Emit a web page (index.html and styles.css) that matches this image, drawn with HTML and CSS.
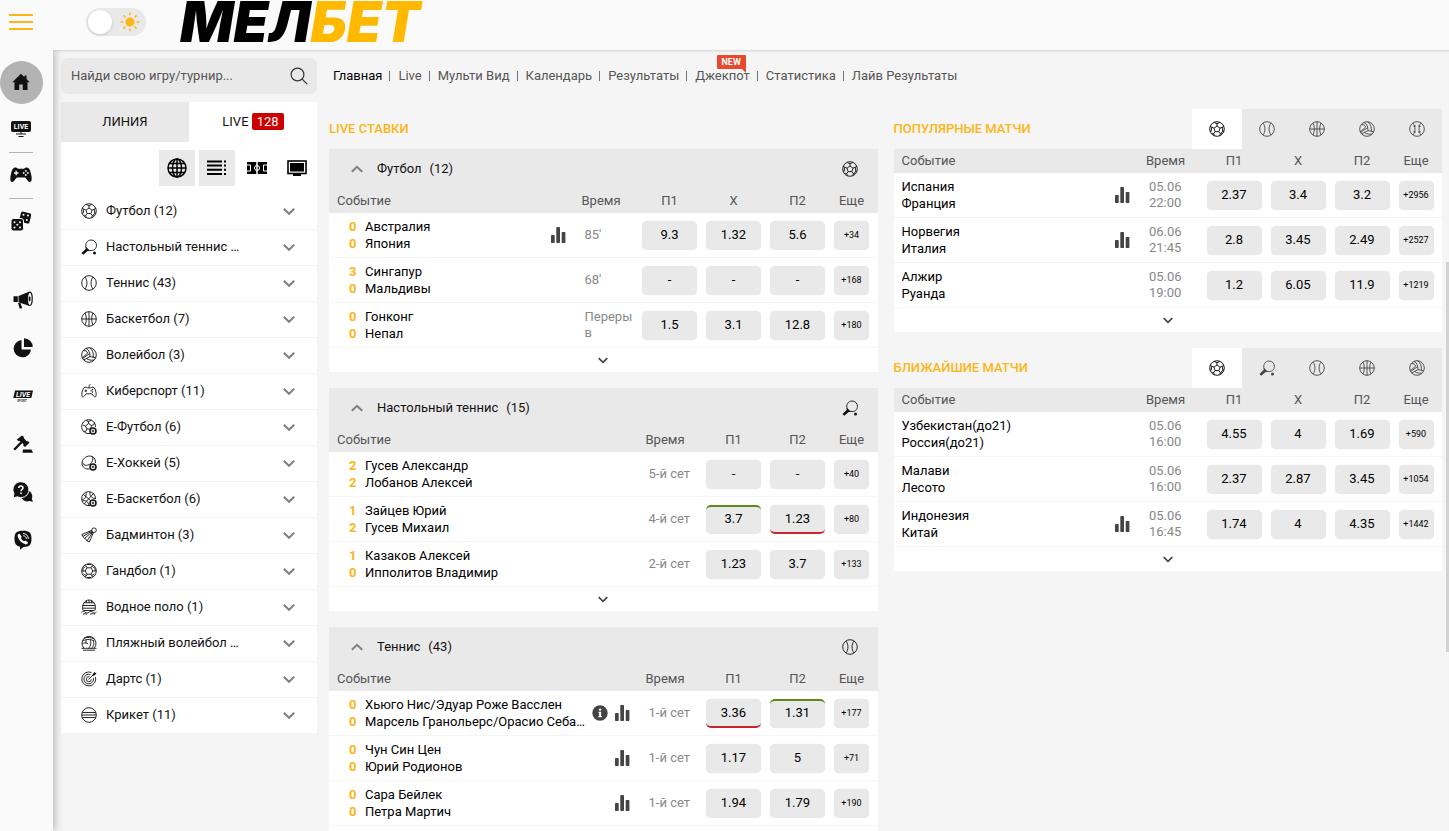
FILE: index.html
```html
<!DOCTYPE html>
<html lang="ru">
<head>
<meta charset="utf-8">
<title>Мелбет</title>
<meta name="viewport" content="width=device-width, initial-scale=1">
<link rel="stylesheet" href="styles.css">
</head>
<body>
<svg class="sprite" aria-hidden="true">
  <symbol id="i-football" viewBox="0 0 16 16"><g fill="none" stroke="currentColor"><circle cx="8" cy="8" r="7.300"/><path d="M8 5l3 2.200-1.100 3.400H6.100L5 7.200zM8 5V2.800M11 7.200l2.200-1M9.900 10.600l1.400 2M6.100 10.600l-1.400 2M5 7.200l-2.200-1M5.200 1.400L8 2.800l2.800-1.400M14.900 5.200l-1.700 1 .6 4-1.700 1.900M13.800 10.200l1 .2M11.300 12.600l-.6 2.200M11.300 12.600l1.500-.4M4.700 12.600l.6 2.200M4.700 12.600l-1.500-.4M1.100 5.200l1.700 1-.6 4-1 .2"/></g></symbol>
  <symbol id="i-pingpong" viewBox="0 0 16 16"><g fill="none" stroke="currentColor"><path d="M5.200 9C3.600 4.500 6.500 1 10 1c3.300 0 5.500 2.600 5.500 5.300 0 3.500-3 5.800-6.800 5.100"/></g><path fill="currentColor" d="M4.800 7.800l4.500 4.100-2.600.2-4.500 3.600L.5 14l4.100-4z"/><circle cx="13.500" cy="14" r="1.500" fill="currentColor"/></symbol>
  <symbol id="i-tennis" viewBox="0 0 16 16"><g fill="none" stroke="currentColor"><circle cx="8" cy="8" r="7.300"/><path d="M4 2c2.600 3.500 2.600 8.500 0 12M12 2c-2.600 3.500-2.600 8.500 0 12"/></g></symbol>
  <symbol id="i-basket" viewBox="0 0 16 16"><g fill="none" stroke="currentColor"><circle cx="8" cy="8" r="7.300"/><path d="M8 .7v14.600M.7 8h14.600M4 2c1.800 3.500 1.800 8.500 0 12M12 2c-1.800 3.500-1.800 8.500 0 12"/></g></symbol>
  <symbol id="i-volley" viewBox="0 0 16 16"><g fill="none" stroke="currentColor"><circle cx="8" cy="8" r="7.300"/><path d="M5 1.500c2.600.8 3.900 3.500 4 8.100l-6.300 3.300M9 9.600l5.700 1.200M8.700 1c2.600 1.300 3.900 4.500 3.600 9.300M2.500 3.500c2.200 0 3.700 1 4.200 2.500L1.200 11M8.700 6.500L1.500 11.500M5.500 11.500c2.300 1.600 4.800 2 7.500 1.500"/></g></symbol>
  <symbol id="i-baseball" viewBox="0 0 16 16"><g fill="none" stroke="currentColor"><circle cx="8" cy="8" r="7.300"/><path d="M4 2c2.600 3.500 2.600 8.500 0 12M12 2c-2.600 3.500-2.600 8.500 0 12M4.500 5.500l2.500-.7M4.500 10.500l2.500.7M11.500 5.500L9 4.800M11.500 10.500l-2.500.7"/></g></symbol>
  <symbol id="i-cyber" viewBox="0 0 16 16"><g fill="none" stroke="currentColor"><path d="M1.200 13.500C.2 11 1.200 7 3 4.700c1.500-1 3-.2 3.500.2h3c.5-.4 2-1.200 3.500-.2 1.800 2.300 2.800 6.300 1.800 8.800-.8 1.500-2.300-.5-4-2.700H5.200c-1.700 2.200-3.200 4.200-4 2.700zM8 4.800V3.200c0-1 1-.6 1-2M3.500 7.800h2.600M4.800 6.500v2.600"/></g><circle cx="11.500" cy="6.500" r=".7" fill="currentColor"/><circle cx="11.500" cy="9" r=".7" fill="currentColor"/><circle cx="10.200" cy="7.800" r=".7" fill="currentColor"/></symbol>
  <symbol id="i-efoot" viewBox="0 0 16 16"><g fill="none" stroke="currentColor"><path d="M9 14.500A7 7 0 1 1 14.600 8M7.500 4.500l3 2-1 3.500H6L4.500 7zM7.500 4.500v-2L5 1.500M7.500 2.500l3-1.300M10.500 6.500l2.500-1 .5-2M4.500 7L1.800 6M6 10l-1.500 2.500M4.500 12.500l-2-.5"/><circle cx="12" cy="12" r="3" stroke-width="1.500"/><circle cx="12" cy="12" r=".9"/></g></symbol>
  <symbol id="i-ehock" viewBox="0 0 16 16"><g fill="none" stroke="currentColor"><path d="M8.500 14C5 14.500 1 12.500 1 8.500 1 4 5 1 8.800 1c3 0 5.400 2.200 5.600 5v2M1.500 7.500c1 4 6.500 3.500 9 0 1.700-2.500 1.800-5 .5-6"/><circle cx="12" cy="12" r="3" stroke-width="1.500"/><circle cx="12" cy="12" r=".9"/></g></symbol>
  <symbol id="i-ebask" viewBox="0 0 16 16"><g fill="none" stroke="currentColor"><path d="M9 14.500A7 7 0 1 1 14.600 8M2.500 3.500l7 6M12.500 2.500L3 13M5 1.500c.5 4-.5 6-4 7.500M1.500 10c3-1 5.500 0 6.500 4.500M9 1c-.5 3.500 1 6 5.300 6.500"/><circle cx="12" cy="12" r="3" stroke-width="1.500"/><circle cx="12" cy="12" r=".9"/></g></symbol>
  <symbol id="i-badm" viewBox="0 0 16 16"><g fill="none" stroke="currentColor"><circle cx="13" cy="3.200" r="2.300"/><path d="M10.300 3.500L.8 7.500l1 2 1.200 1 .8 1.200 1.500.8 1 1.600 2 .9 4-9M11 4L1.800 9.500M11.500 4.500l-8 7M12 5l-6 8.800M8.300 4.500l3.500 3.400"/></g></symbol>
  <symbol id="i-hand" viewBox="0 0 16 16"><g fill="none" stroke="currentColor"><circle cx="8" cy="8" r="7.300"/><path d="M6 4.800h4L11.800 8 10 11.200H6L4.200 8zM6 4.800L4.500 2M10 4.800L11.500 2M11.800 8h3.400M10 11.200l1.500 2.800M6 11.200L4.500 14M4.200 8H.8M4.500 3.500L2 5.500 1.800 8M11.500 3.500L14 5.500l.2 2.500M2.500 11L5 12.500M13.500 11L11 12.500M6 1.500h4M6 14.500h4"/></g></symbol>
  <symbol id="i-polo" viewBox="0 0 16 16"><g fill="none" stroke="currentColor"><path d="M2 11.500C.5 5 4 1 8 1s7.500 4 6 10.500M3 3.800h10M1.500 6.500h13M1.500 9.200h13M5.500 1.500v2.300M8 1v2.800M10.500 1.500v2.300M2.500 11.500h11M.5 13.200c1.300-1 2.500-1 3.700 0s2.600 1 3.800 0 2.600-1 3.800 0 2.600 1 3.700 0M2 15.200c1.500-.7 2.600-.7 4 0M9 15.200c1.500-.7 3-.7 5 0"/></g></symbol>
  <symbol id="i-beach" viewBox="0 0 16 16"><g fill="none" stroke="currentColor"><path d="M2.800 13A7 7 0 1 1 13.200 13M1.500 6c3-2 8-2 12 0M3 3c3.500-1 8-.5 10 1M9 4.500c1.500 3 1 6-1.500 9M12 5.500c1.500 2.500.8 5-1.500 8M1.200 9c2-1.500 4-1.500 6 0M5 5v3.200M.5 13.300h15M2 15.200h12"/></g></symbol>
  <symbol id="i-darts" viewBox="0 0 16 16"><g fill="none" stroke="currentColor"><path d="M10.500 1.500A7 7 0 1 0 14.500 6M9.500 3.600A4.800 4.800 0 1 0 12.400 7M8.500 5.800a2.500 2.500 0 1 0 1.800 2.400M7.500 8.500L13 3"/></g><path fill="currentColor" d="M11.500 3.200L14 .8l.3 1.200 1.300.3-2.500 2.400h-1.600z"/></symbol>
  <symbol id="i-cricket" viewBox="0 0 16 16"><g fill="none" stroke="currentColor"><circle cx="8" cy="8" r="7.300"/><path d="M1.300 5.500h13.400M.8 8h14.400M1.300 10.500h13.400"/></g></symbol>
  <symbol id="i-down" viewBox="0 0 12 12"><path fill="none" stroke="currentColor" stroke-width="2" d="M.8 3.800L6 8.800l5.200-5"/></symbol>
  <symbol id="i-up" viewBox="0 0 12 12"><path fill="none" stroke="currentColor" stroke-width="2" d="M.8 8.800L6 3.800l5.200 5"/></symbol>
  <symbol id="i-stat" viewBox="0 0 16 16"><g fill="currentColor"><rect x="1" y="8" width="3.700" height="8" rx=".7"/><rect x="6.300" y="0" width="3.700" height="16" rx=".7"/><rect x="11.700" y="5" width="3.700" height="11" rx=".7"/></g></symbol>
  <symbol id="i-info" viewBox="0 0 16 16"><circle cx="8" cy="8" r="7.700" fill="currentColor"/><path fill="#fff" d="M6.500 6.700h2.600v4.300h.8v1.300H6.300V11h.8V8h-.6z"/><circle cx="8.100" cy="4.600" r="1.200" fill="#fff"/></symbol>
</svg>

<header class="top">
  <button class="burger" aria-label="Меню"><span></span><span></span><span></span></button>
  <label class="theme" aria-label="Тема">
    <input type="checkbox">
    <svg viewBox="0 0 20 20" width="20" height="20"><circle cx="10" cy="10" r="4.500" fill="#fdb515"/><path stroke="#fdb515" stroke-width="1.600" stroke-linecap="round" d="M10 1.200v1.600M10 17.200v1.600M1.200 10h1.600M17.200 10h1.600M3.800 3.800l1.100 1.100M15.100 15.100l1.100 1.100M3.800 16.200l1.100-1.100M15.100 4.900l1.100-1.100"/></svg>
  </label>
  <a class="logo" href="#">МЕЛ<span>БЕТ</span></a>
</header>

<div class="layout">
  <nav class="rail" aria-label="Разделы">
    <a class="home" href="#" aria-label="Главная"><svg viewBox="0 0 18 18" width="18" height="18"><path d="M9 .8L.3 9.300h2.200V17h4.700v-5.500h3.600V17h4.700V9.300h2.200L14.500 6V2.500h-2v1.700z"/></svg></a>
    <a href="#" aria-label="Live"><svg viewBox="0 0 20 16" width="20" height="18"><rect width="20" height="11" rx="2"/><path stroke="#111" d="M10 11v2M5 13h10M7.500 15.500h5"/><text class="live-txt" x="10" y="8" text-anchor="middle">LIVE</text></svg></a>
    <hr>
    <a href="#" aria-label="Игры"><svg viewBox="0 0 22 16" width="22" height="16"><path d="M6 .5l2.200 1.300h5.600L16 .5c3.500 0 4 2.500 5 6.500 1.300 5 .8 8-1.300 8-1.800 0-3-3.500-4.700-4.500H7C5.300 11.500 4.100 15 2.300 15 .2 15-.3 12 1 7 2 3 2.500.5 6 .5z"/><path fill="none" stroke="#fafafa" stroke-width="1.300" d="M4 6h4.500M6.200 3.800v4.400"/><g fill="#fafafa"><circle cx="15.800" cy="3.900" r=".9"/><circle cx="15.800" cy="8" r=".9"/><circle cx="13.700" cy="6" r=".9"/><circle cx="17.900" cy="6" r=".9"/></g></svg></a>
    <hr>
    <a href="#" aria-label="Кости"><svg viewBox="0 0 20 20" width="20" height="20"><rect x="9" y="1.200" width="10.500" height="10.500" rx="2" transform="rotate(14 14 6.500)"/><rect y="7.500" width="12.500" height="12.500" rx="2.500" stroke="#fafafa"/><g fill="#fafafa"><circle cx="3.500" cy="11.200" r="1"/><circle cx="9" cy="11.200" r="1"/><circle cx="6.300" cy="13.800" r="1"/><circle cx="3.500" cy="16.500" r="1"/><circle cx="9" cy="16.500" r="1"/><circle cx="12.500" cy="3.800" r="1"/><circle cx="17" cy="4.500" r="1"/><circle cx="15.800" cy="9" r="1"/></g></svg></a>
    <div class="rail-extra">
      <a href="#" aria-label="Акции"><svg viewBox="0 0 20 18" width="20" height="18"><path d="M.5 5.200h4.300V11H.5zM5.500 5L16 .8v14L5.500 11.200zM5 12h2.500l1.700 5-2.400.8z"/><ellipse cx="16.800" cy="7.800" rx="2.400" ry="6.700" fill="#fafafa" stroke="#111" stroke-width="1.200"/><ellipse cx="16.600" cy="7.800" rx="1" ry="2.600"/></svg></a>
      <a href="#" aria-label="Статистика"><svg viewBox="0 0 20 20" width="20" height="20"><path d="M8.500 2v9.500H18A8.700 8.700 0 1 1 8.500 2z"/><path d="M11 .3A8.700 8.700 0 0 1 19.700 9H11z"/></svg></a>
      <a href="#" aria-label="Live Sport"><svg viewBox="0 0 20 12" width="20" height="12"><path d="M2 .5h18l-1.700 7.500H.3z"/><text class="live-txt slant" x="10" y="6.800" text-anchor="middle">LIVE</text><text class="sport-txt" x="9" y="11.500" text-anchor="middle">SPORT</text></svg></a>
      <a href="#" aria-label="Аукцион"><svg viewBox="0 0 20 18" width="20" height="18"><path d="M9 .5l2 1.600-.3 1 3.200 3.300 1.200-.3 1.400 1.700L12 12l-1.800-1.600.3-1.200-1.200-1.100L2 15.500.3 14l7-7.300-.9-1-1.200.3L3.800 4.500zM10 14.500h8.500L20 17.800H9.500z"/></svg></a>
      <a href="#" aria-label="Помощь"><svg viewBox="0 0 20 20" width="20" height="20"><path d="M12 8a6.500 6.500 0 0 1 6.800 8.800l1.200 3-3.500-.8A6.700 6.700 0 0 1 8 15z"/><path stroke="#fafafa" d="M7.800-.3a8 8 0 1 1-3.500 15.100L0 16l1-4.300A8 8 0 0 1 7.800-.3z"/><path fill="none" stroke="#fafafa" stroke-width="1.600" d="M5.700 6c.2-2.800 4.600-2.500 4.300 0-.2 1.500-2 1.400-2 3.300M8 10.500v1.600"/></svg></a>
      <a href="#" aria-label="Звонок"><svg viewBox="0 0 18 20" width="18" height="20"><path d="M9 .8c6.500 0 8.500 2 8.500 8s-2 8.200-8 8.200L6 19.700v-3C2 15.800.5 13.500.5 8.800.5 2.800 2.500.8 9 .8z"/><path fill="#fafafa" d="M5.500 3.800L7.700 6.500 7 8c.7 1.700 1.600 2.600 3 3.300l1.500-.8 2.500 2c-.5 1.500-1.300 2-2.300 1.900C7.500 13.200 4 9 3.600 5.700c0-1 .8-1.800 1.900-1.900z"/><path fill="none" stroke="#fafafa" d="M9 3.500c3.500.2 5.300 2.300 5.300 5.500M9.300 5.700c2 .2 3 1.400 3 3.200"/></svg></a>
    </div>
  </nav>

  <aside class="side">
    <form class="search" role="search">
      <input type="text" placeholder="Найди свою игру/турнир..." aria-label="Найди свою игру/турнир">
      <button type="button" aria-label="Найти"><svg viewBox="0 0 18 18" width="18" height="18"><g fill="none" stroke="#333" stroke-width="1.200"><circle cx="7.500" cy="7.500" r="6.400"/><path d="M12.200 12.200l5 5"/></g></svg></button>
    </form>
    <div class="panel">
      <div class="tabs">
        <button class="tab muted">ЛИНИЯ</button>
        <button class="tab">LIVE <span class="count">128</span></button>
      </div>
      <div class="tools">
        <button class="on" aria-label="Мир"><svg viewBox="0 0 20 20" width="20" height="20"><g fill="none" stroke="#000" stroke-width="1.500"><circle cx="10" cy="10" r="9"/><ellipse cx="10" cy="10" rx="4.500" ry="9"/><path d="M10 1v18M1 10h18M2.500 5.500h15M2.500 14.500h15"/></g></svg></button>
        <button class="on" aria-label="Список"><svg viewBox="0 0 20 16" width="20" height="16"><path d="M0 .5h15v2H0zM0 4.500h15v2H0zM0 8.800h15v2H0zM0 13h15v2H0zM17 .5h2v2h-2zM17 4.500h2v2h-2zM17 8.800h2v2h-2zM17 13h2v2h-2z"/></svg></button>
        <button aria-label="Поле"><svg viewBox="0 0 20 14" width="20" height="14"><path d="M0 1h9.500v12H0zM10.500 1H20v12h-9.500z"/><g fill="none" stroke="#fff"><circle cx="10" cy="7" r="2.500"/><path d="M0 4h3.500v6H0M20 4h-3.500v6H20M10 1v12"/></g></svg></button>
        <button aria-label="Трансляции"><svg viewBox="0 0 20 16" width="20" height="16"><rect x="1" y="1" width="18" height="12.500" fill="#fff" stroke="#000" stroke-width="1.600"/><path d="M3 3h14v8.500H3zM6 14h8v2H6z"/></svg></button>
      </div>
      <ul class="sports">
        <li><a href="#"><svg><use href="#i-football"/></svg><span>Футбол (12)</span><svg class="arr"><use href="#i-down"/></svg></a></li>
        <li><a href="#"><svg><use href="#i-pingpong"/></svg><span>Настольный теннис …</span><svg class="arr"><use href="#i-down"/></svg></a></li>
        <li><a href="#"><svg><use href="#i-tennis"/></svg><span>Теннис (43)</span><svg class="arr"><use href="#i-down"/></svg></a></li>
        <li><a href="#"><svg><use href="#i-basket"/></svg><span>Баскетбол (7)</span><svg class="arr"><use href="#i-down"/></svg></a></li>
        <li><a href="#"><svg><use href="#i-volley"/></svg><span>Волейбол (3)</span><svg class="arr"><use href="#i-down"/></svg></a></li>
        <li><a href="#"><svg><use href="#i-cyber"/></svg><span>Киберспорт (11)</span><svg class="arr"><use href="#i-down"/></svg></a></li>
        <li><a href="#"><svg><use href="#i-efoot"/></svg><span>Е-Футбол (6)</span><svg class="arr"><use href="#i-down"/></svg></a></li>
        <li><a href="#"><svg><use href="#i-ehock"/></svg><span>Е-Хоккей (5)</span><svg class="arr"><use href="#i-down"/></svg></a></li>
        <li><a href="#"><svg><use href="#i-ebask"/></svg><span>Е-Баскетбол (6)</span><svg class="arr"><use href="#i-down"/></svg></a></li>
        <li><a href="#"><svg><use href="#i-badm"/></svg><span>Бадминтон (3)</span><svg class="arr"><use href="#i-down"/></svg></a></li>
        <li><a href="#"><svg><use href="#i-hand"/></svg><span>Гандбол (1)</span><svg class="arr"><use href="#i-down"/></svg></a></li>
        <li><a href="#"><svg><use href="#i-polo"/></svg><span>Водное поло (1)</span><svg class="arr"><use href="#i-down"/></svg></a></li>
        <li><a href="#"><svg><use href="#i-beach"/></svg><span>Пляжный волейбол …</span><svg class="arr"><use href="#i-down"/></svg></a></li>
        <li><a href="#"><svg><use href="#i-darts"/></svg><span>Дартс (1)</span><svg class="arr"><use href="#i-down"/></svg></a></li>
        <li><a href="#"><svg><use href="#i-cricket"/></svg><span>Крикет (11)</span><svg class="arr"><use href="#i-down"/></svg></a></li>
      </ul>
    </div>
  </aside>

  <main class="main">
    <nav class="menu" aria-label="Меню сайта">
      <ul>
        <li><a class="current" href="#">Главная</a></li>
        <li><a href="#">Live</a></li>
        <li><a href="#">Мульти Вид</a></li>
        <li><a href="#">Календарь</a></li>
        <li><a href="#">Результаты</a></li>
        <li><a href="#">Джекпот</a><span class="new">NEW</span></li>
        <li><a href="#">Статистика</a></li>
        <li><a href="#">Лайв Результаты</a></li>
      </ul>
    </nav>

    <div class="columns">
      <div class="column">
        <div class="heading"><h2>LIVE СТАВКИ</h2></div>

        <section class="block">
          <h3 class="group"><svg class="fold"><use href="#i-up"/></svg><span>Футбол</span><span class="num">(12)</span><svg class="kind"><use href="#i-football"/></svg></h3>
          <table class="odds">
            <colgroup><col><col class="c-time"><col class="c-bet"><col class="c-bet"><col class="c-bet"><col class="c-more"></colgroup>
            <thead><tr><th class="ev">Событие</th><th class="tm">Время</th><th>П1</th><th>X</th><th>П2</th><th class="mr">Еще</th></tr></thead>
            <tbody>
              <tr><td><div class="event"><div class="score">0<br>0</div><div class="teams"><p>Австралия</p><p>Япония</p></div><svg class="stat"><use href="#i-stat"/></svg></div></td><td class="time">85'</td><td><button class="bet">9.3</button></td><td><button class="bet">1.32</button></td><td><button class="bet">5.6</button></td><td class="mr"><button class="bet more">+34</button></td></tr>
              <tr><td><div class="event"><div class="score">3<br>0</div><div class="teams"><p>Сингапур</p><p>Мальдивы</p></div></div></td><td class="time">68'</td><td><button class="bet">-</button></td><td><button class="bet">-</button></td><td><button class="bet">-</button></td><td class="mr"><button class="bet more">+168</button></td></tr>
              <tr><td><div class="event"><div class="score">0<br>0</div><div class="teams"><p>Гонконг</p><p>Непал</p></div></div></td><td class="time">Перерыв</td><td><button class="bet">1.5</button></td><td><button class="bet">3.1</button></td><td><button class="bet">12.8</button></td><td class="mr"><button class="bet more">+180</button></td></tr>
            </tbody>
          </table>
          <button class="expand" aria-label="Показать ещё"><svg><use href="#i-down"/></svg></button>
        </section>

        <section class="block">
          <h3 class="group"><svg class="fold"><use href="#i-up"/></svg><span>Настольный теннис</span><span class="num">(15)</span><svg class="kind"><use href="#i-pingpong"/></svg></h3>
          <table class="odds">
            <colgroup><col><col class="c-time"><col class="c-bet"><col class="c-bet"><col class="c-more"></colgroup>
            <thead><tr><th class="ev">Событие</th><th class="tm">Время</th><th>П1</th><th>П2</th><th class="mr">Еще</th></tr></thead>
            <tbody>
              <tr><td><div class="event"><div class="score">2<br>2</div><div class="teams"><p>Гусев Александр</p><p>Лобанов Алексей</p></div></div></td><td class="time">5-й сет</td><td><button class="bet">-</button></td><td><button class="bet">-</button></td><td class="mr"><button class="bet more">+40</button></td></tr>
              <tr><td><div class="event"><div class="score">1<br>2</div><div class="teams"><p>Зайцев Юрий</p><p>Гусев Михаил</p></div></div></td><td class="time">4-й сет</td><td><button class="bet rise">3.7</button></td><td><button class="bet fall">1.23</button></td><td class="mr"><button class="bet more">+80</button></td></tr>
              <tr><td><div class="event"><div class="score">1<br>0</div><div class="teams"><p>Казаков Алексей</p><p>Ипполитов Владимир</p></div></div></td><td class="time">2-й сет</td><td><button class="bet">1.23</button></td><td><button class="bet">3.7</button></td><td class="mr"><button class="bet more">+133</button></td></tr>
            </tbody>
          </table>
          <button class="expand" aria-label="Показать ещё"><svg><use href="#i-down"/></svg></button>
        </section>

        <section class="block">
          <h3 class="group"><svg class="fold"><use href="#i-up"/></svg><span>Теннис</span><span class="num">(43)</span><svg class="kind"><use href="#i-tennis"/></svg></h3>
          <table class="odds">
            <colgroup><col><col class="c-time"><col class="c-bet"><col class="c-bet"><col class="c-more"></colgroup>
            <thead><tr><th class="ev">Событие</th><th class="tm">Время</th><th>П1</th><th>П2</th><th class="mr">Еще</th></tr></thead>
            <tbody>
              <tr><td><div class="event"><div class="score">0<br>0</div><div class="teams"><p>Хьюго Нис/Эдуар Роже Васслен</p><p>Марсель Гранольерс/Орасио Себа…</p></div><svg class="stat"><use href="#i-info"/></svg><svg class="stat"><use href="#i-stat"/></svg></div></td><td class="time">1-й сет</td><td><button class="bet fall">3.36</button></td><td><button class="bet rise">1.31</button></td><td class="mr"><button class="bet more">+177</button></td></tr>
              <tr><td><div class="event"><div class="score">0<br>0</div><div class="teams"><p>Чун Син Цен</p><p>Юрий Родионов</p></div><svg class="stat"><use href="#i-stat"/></svg></div></td><td class="time">1-й сет</td><td><button class="bet">1.17</button></td><td><button class="bet">5</button></td><td class="mr"><button class="bet more">+71</button></td></tr>
              <tr><td><div class="event"><div class="score">0<br>0</div><div class="teams"><p>Сара Бейлек</p><p>Петра Мартич</p></div><svg class="stat"><use href="#i-stat"/></svg></div></td><td class="time">1-й сет</td><td><button class="bet">1.94</button></td><td><button class="bet">1.79</button></td><td class="mr"><button class="bet more">+190</button></td></tr>
            </tbody>
          </table>
          <button class="expand" aria-label="Показать ещё"><svg><use href="#i-down"/></svg></button>
        </section>
      </div>

      <div class="column">
        <section class="block">
          <div class="heading"><h2>ПОПУЛЯРНЫЕ МАТЧИ</h2>
            <div class="kinds">
              <button class="active" aria-label="Футбол"><svg><use href="#i-football"/></svg></button>
              <button aria-label="Теннис"><svg><use href="#i-tennis"/></svg></button>
              <button aria-label="Баскетбол"><svg><use href="#i-basket"/></svg></button>
              <button aria-label="Волейбол"><svg><use href="#i-volley"/></svg></button>
              <button aria-label="Бейсбол"><svg><use href="#i-baseball"/></svg></button>
            </div>
          </div>
          <table class="odds">
            <colgroup><col><col class="c-time"><col class="c-bet"><col class="c-bet"><col class="c-bet"><col class="c-more"></colgroup>
            <thead><tr><th class="ev">Событие</th><th class="tm">Время</th><th>П1</th><th>X</th><th>П2</th><th class="mr">Еще</th></tr></thead>
            <tbody>
              <tr><td><div class="event plain"><div class="teams"><p>Испания</p><p>Франция</p></div><svg class="stat"><use href="#i-stat"/></svg></div></td><td class="time">05.06<br>22:00</td><td><button class="bet">2.37</button></td><td><button class="bet">3.4</button></td><td><button class="bet">3.2</button></td><td class="mr"><button class="bet more">+2956</button></td></tr>
              <tr><td><div class="event plain"><div class="teams"><p>Норвегия</p><p>Италия</p></div><svg class="stat"><use href="#i-stat"/></svg></div></td><td class="time">06.06<br>21:45</td><td><button class="bet">2.8</button></td><td><button class="bet">3.45</button></td><td><button class="bet">2.49</button></td><td class="mr"><button class="bet more">+2527</button></td></tr>
              <tr><td><div class="event plain"><div class="teams"><p>Алжир</p><p>Руанда</p></div></div></td><td class="time">05.06<br>19:00</td><td><button class="bet">1.2</button></td><td><button class="bet">6.05</button></td><td><button class="bet">11.9</button></td><td class="mr"><button class="bet more">+1219</button></td></tr>
            </tbody>
          </table>
          <button class="expand" aria-label="Показать ещё"><svg><use href="#i-down"/></svg></button>
        </section>

        <section class="block">
          <div class="heading"><h2>БЛИЖАЙШИЕ МАТЧИ</h2>
            <div class="kinds">
              <button class="active" aria-label="Футбол"><svg><use href="#i-football"/></svg></button>
              <button aria-label="Настольный теннис"><svg><use href="#i-pingpong"/></svg></button>
              <button aria-label="Теннис"><svg><use href="#i-tennis"/></svg></button>
              <button aria-label="Баскетбол"><svg><use href="#i-basket"/></svg></button>
              <button aria-label="Волейбол"><svg><use href="#i-volley"/></svg></button>
            </div>
          </div>
          <table class="odds">
            <colgroup><col><col class="c-time"><col class="c-bet"><col class="c-bet"><col class="c-bet"><col class="c-more"></colgroup>
            <thead><tr><th class="ev">Событие</th><th class="tm">Время</th><th>П1</th><th>X</th><th>П2</th><th class="mr">Еще</th></tr></thead>
            <tbody>
              <tr><td><div class="event plain"><div class="teams"><p>Узбекистан(до21)</p><p>Россия(до21)</p></div></div></td><td class="time">05.06<br>16:00</td><td><button class="bet">4.55</button></td><td><button class="bet">4</button></td><td><button class="bet">1.69</button></td><td class="mr"><button class="bet more">+590</button></td></tr>
              <tr><td><div class="event plain"><div class="teams"><p>Малави</p><p>Лесото</p></div></div></td><td class="time">05.06<br>16:00</td><td><button class="bet">2.37</button></td><td><button class="bet">2.87</button></td><td><button class="bet">3.45</button></td><td class="mr"><button class="bet more">+1054</button></td></tr>
              <tr><td><div class="event plain"><div class="teams"><p>Индонезия</p><p>Китай</p></div><svg class="stat"><use href="#i-stat"/></svg></div></td><td class="time">05.06<br>16:45</td><td><button class="bet">1.74</button></td><td><button class="bet">4</button></td><td><button class="bet">4.35</button></td><td class="mr"><button class="bet more">+1442</button></td></tr>
            </tbody>
          </table>
          <button class="expand" aria-label="Показать ещё"><svg><use href="#i-down"/></svg></button>
        </section>
      </div>
    </div>
  </main>
</div>
<div class="scroll-thumb"></div>
</body>
</html>
```

FILE: styles.css
```css
* { box-sizing: border-box; }

body {
  margin: 0;
  height: 100vh;
  overflow: hidden;
  display: flex;
  flex-direction: column;
  background: #f5f5f5;
  color: #111;
  font: 13px/16px Roboto, "Open Sans", sans-serif;
}

a { color: inherit; text-decoration: none; }
ul { list-style: none; margin: 0; padding: 0; }
h2, h3, p { margin: 0; font-weight: 400; font-size: 13px; }
button { border: 0; padding: 0; margin: 0; background: none; font: inherit; color: inherit; cursor: pointer; }
svg { display: block; flex: none; }
.sprite { position: absolute; width: 0; height: 0; }

/* Header */
.top {
  flex: none;
  height: 50px;
  display: flex;
  align-items: center;
  padding-left: 9px;
  background: #fafafa;
}
.burger { display: flex; flex-direction: column; gap: 5px; width: 24px; margin: 0 53px 6px 0; }
.burger span { height: 2px; background: #fdb515; }
.theme {
  display: flex;
  align-items: center;
  justify-content: space-between;
  width: 60px;
  height: 28px;
  margin: 0 34px 6px 0;
  padding: 0 6px 0 2px;
  border-radius: 14px;
  background: #e9e9e9;
}
.theme input {
  appearance: none;
  width: 24px;
  height: 24px;
  margin: 0;
  border-radius: 50%;
  background: #fff;
  box-shadow: 0 1px 3px rgba(0, 0, 0, .15);
}
.logo { color: #000; font-family: Inter, Roboto, sans-serif; font-size: 56px; line-height: 44px; font-weight: 900; font-style: italic; margin-bottom: 6px; }
.logo span { color: #ffba00; }

.layout { flex: 1; min-height: 0; display: flex; align-items: stretch; }

/* Icon rail */
.rail {
  flex: none;
  width: 53px;
  padding-top: 11px;
  background: #fafafa;
  box-shadow: 2px 0 8px rgba(0, 0, 0, .25);
  clip-path: inset(0 -12px 0 0);
}
.rail a { display: flex; align-items: center; justify-content: center; width: 42px; height: 45px; padding-bottom: 2px; fill: #111; }
.rail .home { width: 43px; height: 43px; padding-right: 2px; border-radius: 50%; background: #b3b3b3; margin-bottom: 3px; }
.rail hr { width: 24px; height: 1px; margin: 0 0 0 9px; border: 0; background: #b3b3b3; }
.rail-extra { margin: 33px 0 0 2px; }
.rail-extra a { height: 48px; }
.live-txt { fill: #fff; font: 700 7px Roboto, sans-serif; }
.slant { font-style: italic; }
.sport-txt { fill: #333; font: 700 3px Roboto, sans-serif; }

/* Sport list */
.side { flex: none; width: 264px; padding: 8px 0 0 8px; box-shadow: inset 0 3px 3px -2px rgba(0, 0, 0, .15); }
.search {
  display: flex;
  align-items: center;
  height: 36px;
  margin-bottom: 8px;
  padding: 0 9px 0 10px;
  border-radius: 7px;
  background: #e9e9e9;
}
.search input { flex: 1; min-width: 0; border: 0; padding: 0; outline: 0; background: none; font: inherit; }
.search input::placeholder { color: #555; opacity: 1; }
.panel { background: #fff; }
.tabs { display: flex; }
.tab { flex: 1; height: 40px; }
.muted { background: #e9e9e9; }
.count { padding: 1px 5px; border-radius: 2px; background: #c00; color: #fff; }
.tools { display: flex; justify-content: flex-end; gap: 4px; padding: 8px 2px; }
.tools button { display: grid; place-items: center; width: 36px; height: 36px; }
.tools .on { background: #e9e9e9; }
.sports a {
  display: flex;
  align-items: center;
  gap: 9px;
  height: 36px;
  padding: 0 22px 1px 20px;
  border-bottom: 1px solid #f5f5f5;
}
.sports svg { width: 16px; height: 16px; stroke-width: .9; }
.sports span { flex: 1; }
.sports .arr { width: 12px; height: 12px; color: #808080; }

/* Site menu */
.main { flex: 1; min-width: 0; padding: 0 7px 0 12px; box-shadow: inset 0 3px 3px -2px rgba(0, 0, 0, .15); }
.menu { padding: 18px 0 0 4px; }
.menu ul { display: flex; }
.menu li { position: relative; display: flex; align-items: center; color: #555; }
.menu li + li::before { content: ""; width: 1px; height: 10px; margin: 0 8px 0 7px; background: #777; }
.current { color: #000; }
.new {
  position: absolute;
  right: 4px;
  top: -13px;
  padding: 0 5px;
  border-radius: 1px;
  background: #e6492d;
  color: #fff;
  font-size: 9px;
  line-height: 14px;
  font-weight: 700;
}
.new::after {
  content: "";
  position: absolute;
  right: 0;
  top: 100%;
  border-top: 4px solid #e6492d;
  border-left: 4px solid transparent;
}

/* Match blocks */
.columns { display: grid; grid-template-columns: 1fr 1fr; gap: 16px; padding-top: 25px; }
.column { min-width: 0; }
.block { margin-bottom: 16px; }
.heading { display: flex; align-items: center; justify-content: space-between; height: 40px; }
.heading h2 { color: #fdb515; font-weight: 500; }
.kinds { display: flex; background: #e9e9e9; }
.kinds button { display: grid; place-items: center; width: 50px; height: 40px; color: #444; }
.kinds .active { background: #fff; color: #000; }
.kinds svg, .kind { width: 16px; height: 16px; stroke-width: .9; }
.group { display: flex; align-items: center; height: 40px; padding: 0 20px 0 22px; background: #e9e9e9; }
.fold { width: 12px; height: 12px; margin-right: 14px; color: #808080; }
.num { margin-left: 8px; }
.kind { margin-left: auto; }

.odds { width: 100%; table-layout: fixed; border-collapse: separate; border-spacing: 0; background: #fff; }
.c-time { width: 60px; }
.c-bet { width: 64px; }
.c-more { width: 48px; }
.odds th { height: 24px; padding: 0; background: #e9e9e9; color: #555; font-weight: 400; text-align: center; }
.odds .ev { padding-left: 8px; text-align: left; }
.odds .tm { padding-left: 4px; text-align: left; }
.odds .mr { padding-right: 4px; }
.odds td { height: 45px; padding: 0; border-bottom: 1px solid #f5f5f5; text-align: center; }
.event { display: flex; align-items: center; gap: 6px; padding: 0 12px 0 20px; line-height: 17px; text-align: left; }
.event.plain { padding-left: 8px; }
.score { width: 8px; margin-right: 2px; color: #fdb515; font-weight: 700; }
.teams { flex: 1; min-width: 0; color: #000; }
.teams p { overflow: hidden; white-space: nowrap; text-overflow: ellipsis; }
.stat { width: 16px; height: 16px; color: #444; }
.odds .time { padding: 0 2px 0 7px; color: #888; text-align: left; word-break: break-all; }
.bet {
  width: 55px;
  height: 29px;
  border-radius: 5px;
  background: #e9e9e9;
  color: #000;
  box-shadow: 0 0 1px #ddd;
}
.more { width: 35px; font-size: 9px; }
.rise { border-top: 2px solid #5f8a1a; padding-bottom: 2px; }
.fall { border-bottom: 2px solid #c8262c; padding-top: 2px; }
.expand { display: grid; place-items: center; width: 100%; height: 24px; background: #fff; color: #444; }
.expand svg { width: 10px; height: 10px; }

.scroll-thumb { position: fixed; right: 0; top: 262px; width: 3px; height: 390px; background: #d2d2d2; }
```
